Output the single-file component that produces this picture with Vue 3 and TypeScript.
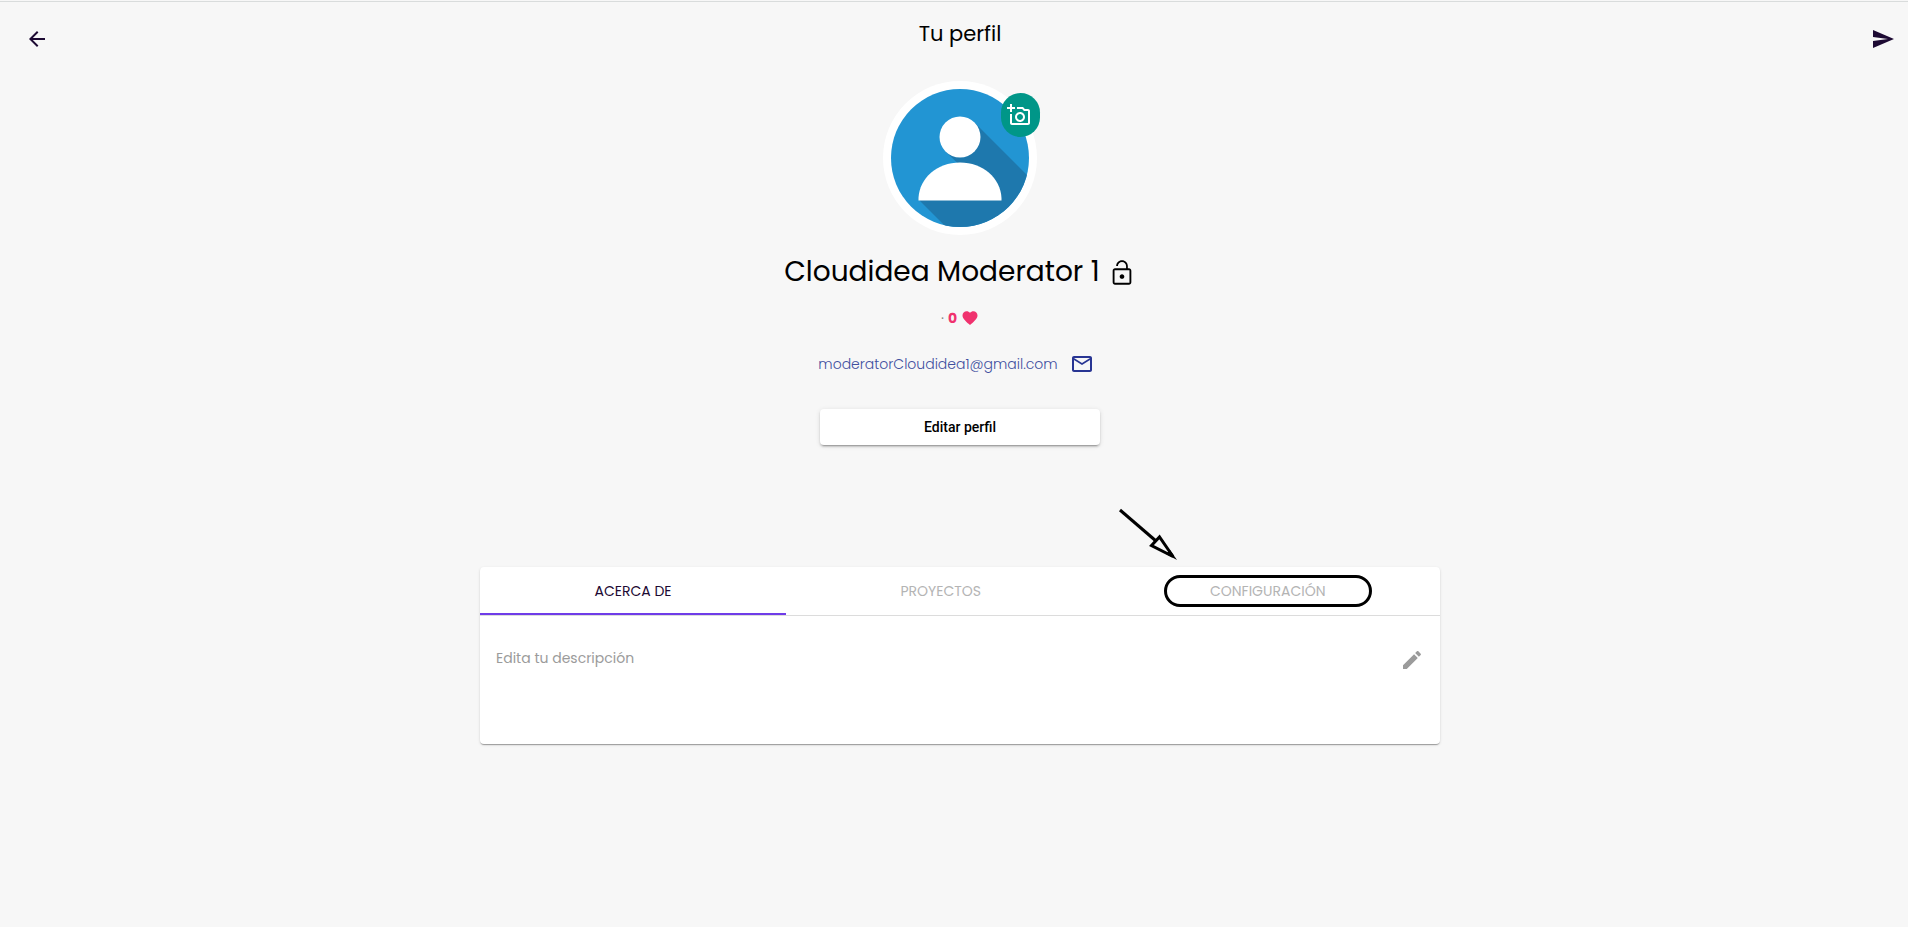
<script setup lang="ts">
import { ref } from 'vue'

interface Tab {
  id: string
  label: string
  highlighted: boolean
}

const tabs: Tab[] = [
  { id: 'about', label: 'ACERCA DE', highlighted: false },
  { id: 'projects', label: 'PROYECTOS', highlighted: false },
  { id: 'settings', label: 'CONFIGURACIÓN', highlighted: true },
]

const active = ref<string>('about')
const likes = ref<number>(0)
const email = 'moderatorCloudidea1@gmail.com'
</script>

<template>
  <div class="page">
    <header class="topbar">
      <button class="icon-button" type="button" aria-label="Volver">
        <svg class="icon" viewBox="0 0 24 24"><path d="M20 11H7.83l5.59-5.59L12 4l-8 8 8 8 1.41-1.41L7.83 13H20v-2z" /></svg>
      </button>
      <h1 class="title">Tu perfil</h1>
      <button class="icon-button send" type="button" aria-label="Enviar">
        <svg class="icon" viewBox="0 0 24 24"><path d="M2.01 21L23 12 2.01 3 2 10l15 2-15 2z" /></svg>
      </button>
    </header>

    <main class="content">
      <div class="avatar">
        <svg class="portrait" viewBox="0 0 154 154" role="img" aria-label="Foto de perfil">
          <defs>
            <clipPath id="disc"><circle cx="77" cy="77" r="69" /></clipPath>
          </defs>
          <circle cx="77" cy="77" r="77" fill="#fff" />
          <g clip-path="url(#disc)">
            <rect width="154" height="154" fill="#2295d3" />
            <path d="M92 42L160 110V160H77L36 119L77 84.500L62 70Z" fill="#1e78ad" />
            <circle cx="77" cy="56" r="20.500" fill="#fff" />
            <path d="M35.500 119.500V117C36.500 97 54 81.500 77 81.500S117.500 97 118.500 117V119.500Z" fill="#fff" />
          </g>
        </svg>
        <button class="photo-button" type="button" aria-label="Cambiar foto">
          <svg class="icon" viewBox="0 0 24 24"><path d="M21 6h-3.170L16 4h-6v2h5.120l1.830 2H21v12H5v-9H3v9c0 1.100.9 2 2 2h16c1.100 0 2-.9 2-2V8c0-1.100-.9-2-2-2zM8 14c0 2.760 2.240 5 5 5s5-2.240 5-5-2.240-5-5-5-5 2.240-5 5zm5-3c1.650 0 3 1.350 3 3s-1.350 3-3 3-3-1.350-3-3 1.350-3 3-3zM5 6h3V4H5V1H3v3H0v2h3v3h2z" /></svg>
        </button>
      </div>

      <div class="name-row">
        <h2 class="name">Cloudidea Moderator 1</h2>
        <svg class="lock" viewBox="0 0 24 24"><path d="M12 17c1.100 0 2-.9 2-2s-.9-2-2-2-2 .9-2 2 .9 2 2 2zm6-9h-1V6c0-2.760-2.240-5-5-5S7 3.240 7 6h1.500c0-1.930 1.570-3.500 3.500-3.500s3.500 1.570 3.500 3.500v2H6c-1.100 0-2 .9-2 2v10c0 1.100.9 2 2 2h12c1.100 0 2-.9 2-2V10c0-1.100-.9-2-2-2zm.4 12.400H5.600V9.600h12.800v10.800z" /></svg>
      </div>

      <div class="likes">
        <span class="dot">·</span>
        <span>{{ likes }}</span>
        <svg class="heart" viewBox="0 0 24 24"><path d="M12 21.350l-1.450-1.320C5.400 15.360 2 12.280 2 8.500 2 5.420 4.420 3 7.500 3c1.740 0 3.410.81 4.500 2.090C13.090 3.810 14.760 3 16.500 3 19.580 3 22 5.420 22 8.500c0 3.780-3.400 6.860-8.550 11.540L12 21.350z" /></svg>
      </div>

      <a class="email" :href="'mailto:' + email">
        <span>{{ email }}</span>
        <svg class="icon" viewBox="0 0 24 24"><path d="M20 4H4c-1.100 0-2 .9-2 2v12c0 1.100.9 2 2 2h16c1.100 0 2-.9 2-2V6c0-1.100-.9-2-2-2zm0 14H4V8l8 5 8-5v10zm-8-7L4 6h16l-8 5z" /></svg>
      </a>

      <button class="edit-profile" type="button">Editar perfil</button>

      <section class="card">
        <div class="tabs" role="tablist">
          <button
            v-for="tab in tabs"
            :key="tab.id"
            class="tab"
            :class="{ active: active === tab.id }"
            type="button"
            role="tab"
            :aria-selected="active === tab.id"
            @click="active = tab.id"
          >
            <span class="tab-label">
              {{ tab.label }}
              <span v-if="tab.highlighted" class="ring" aria-hidden="true">
                <svg class="pointer" viewBox="0 0 60 54">
                  <path d="M1 2L37 33" />
                  <path d="M32.500 37.500L40.500 29L54 48.500Z" fill="#f7f7f7" />
                  <path class="tip" d="M47 46L51 42L58 52Z" />
                </svg>
              </span>
            </span>
          </button>
        </div>
        <div class="panel" role="tabpanel">
          <p class="description">Edita tu descripción</p>
          <button class="icon-button pencil" type="button" aria-label="Editar descripción">
            <svg class="icon" viewBox="0 0 24 24"><path d="M3 17.250V21h3.750L17.810 9.940l-3.750-3.750L3 17.250zM20.710 7.040c.39-.39.39-1.020 0-1.410l-2.340-2.340c-.39-.39-1.020-.39-1.410 0l-1.830 1.830 3.750 3.750 1.830-1.830z" /></svg>
          </button>
        </div>
      </section>
    </main>
  </div>
</template>

<style>
body {
  margin: 0;
  background: #f7f7f7;
}
</style>

<style scoped>
.page {
  box-sizing: border-box;
  min-height: calc(100vh - 1px);
  margin-top: 1px;
  border-top: 1px solid #d9dcdc;
  font-family: Poppins, Inter, "Open Sans", sans-serif;
  font-weight: 400;
  color: #000;
}

button {
  padding: 0;
  border: 0;
  background: none;
  font: inherit;
  cursor: pointer;
}

.icon {
  display: block;
  width: 24px;
  height: 24px;
  fill: currentColor;
}

.icon-button {
  color: #1d0a33;
}

.topbar {
  display: grid;
  grid-template-columns: 1fr auto 1fr;
  align-items: center;
  height: 64px;
  padding: 5px 13px 0 25px;
}

.topbar .icon-button {
  justify-self: start;
}

.topbar .send {
  justify-self: end;
}

.title {
  margin: 0;
  padding-bottom: 10px;
  font-size: 21px;
  line-height: 30px;
  font-weight: 400;
}

.content {
  display: flex;
  flex-direction: column;
  align-items: center;
  padding: 10px 0 0 12px;
}

.avatar {
  position: relative;
  width: 154px;
  height: 154px;
}

.portrait {
  display: block;
  width: 100%;
  height: 100%;
}

.photo-button {
  position: absolute;
  top: 12px;
  right: -3px;
  display: grid;
  place-items: center;
  width: 39px;
  height: 44px;
  padding-right: 3px;
  border-radius: 20px;
  background: #009688;
  color: #fff;
}

.name-row {
  display: flex;
  align-items: center;
  gap: 8px;
  margin-top: 16px;
}

.name {
  margin: 0;
  font-size: 28px;
  line-height: 42px;
  font-weight: 400;
}

.lock {
  width: 28px;
  height: 28px;
  margin-top: 2px;
}

.likes {
  display: flex;
  align-items: center;
  gap: 4px;
  margin-top: 15px;
  font-size: 14px;
  line-height: 20px;
  font-weight: 700;
  color: #f0326e;
}

.dot {
  font-weight: 400;
  color: #888;
}

.heart {
  width: 18px;
  height: 18px;
  fill: currentColor;
}

.email {
  display: flex;
  align-items: center;
  gap: 12px;
  margin-top: 24px;
  padding-right: 8px;
  font-size: 14px;
  line-height: 24px;
  font-weight: 300;
  color: #3f4f9f;
  text-decoration: none;
}

.email .icon {
  color: #283593;
}

.edit-profile {
  width: 280px;
  height: 36px;
  margin-top: 33px;
  border-radius: 4px;
  background: #fff;
  box-shadow: 0 3px 1px -2px rgba(0, 0, 0, 0.2), 0 2px 2px 0 rgba(0, 0, 0, 0.14), 0 1px 5px 0 rgba(0, 0, 0, 0.12);
  font-family: Roboto, sans-serif;
  font-size: 14px;
  font-weight: 500;
  color: #000;
}

.card {
  width: 100%;
  max-width: 960px;
  margin-top: 122px;
  border-radius: 4px;
  background: #fff;
  box-shadow: 0 2px 1px -1px rgba(0, 0, 0, 0.2), 0 1px 1px 0 rgba(0, 0, 0, 0.14), 0 1px 3px 0 rgba(0, 0, 0, 0.12);
}

.tabs {
  display: flex;
  border-bottom: 1px solid #dcdcdc;
}

.tab {
  flex: 1 1 auto;
  height: 48px;
  border-top: 2px solid transparent;
  border-bottom: 2px solid transparent;
  font-size: 14px;
  color: #b4b4b4;
}

.tab.active {
  border-bottom-color: #6f3ce8;
  color: #1d0a33;
}

.tab-label {
  position: relative;
}

.ring {
  position: absolute;
  top: -6px;
  right: -46px;
  bottom: -6px;
  left: -46px;
  border: 3px solid #000;
  border-radius: 17px;
}

.pointer {
  position: absolute;
  right: 100%;
  bottom: 100%;
  width: 60px;
  height: 54px;
  margin: 0 -12px 16px 0;
  fill: none;
  stroke: #000;
  stroke-width: 3;
}

.pointer .tip {
  fill: #000;
  stroke: none;
}

.panel {
  display: flex;
  align-items: flex-start;
  justify-content: space-between;
  min-height: 96px;
  padding: 32px 16px 0;
}

.description {
  margin: 0;
  font-size: 14px;
  line-height: 20px;
  font-weight: 400;
  color: #9b9b9b;
}

.pencil {
  color: #9b9b9b;
}
</style>
